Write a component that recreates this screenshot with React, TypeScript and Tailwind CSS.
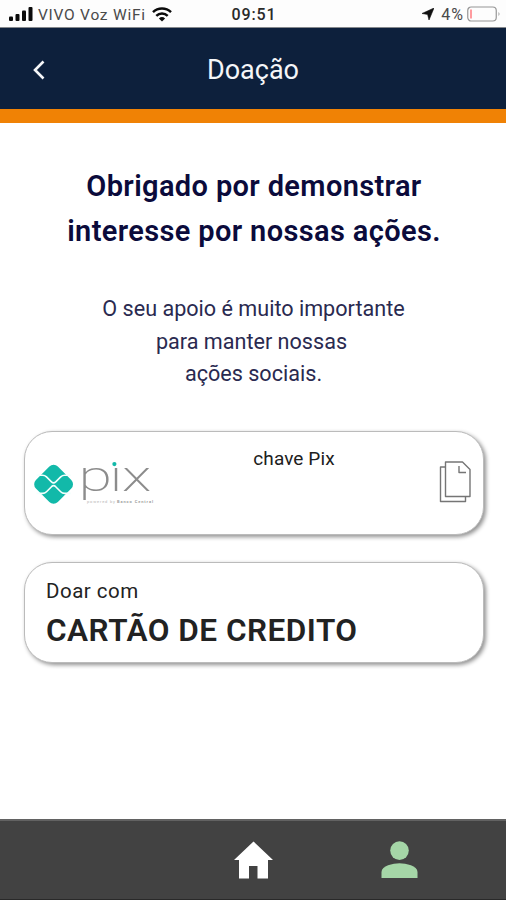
import React from "react";

function SignalIcon() {
  return (
    <svg width="24" height="14" viewBox="0 0 24 14" fill="#0b0b0b">
      <rect x="0" y="9.5" width="4" height="4.5" rx="1" />
      <rect x="6.5" y="7" width="4" height="7" rx="1" />
      <rect x="13" y="3.5" width="4" height="10.5" rx="1" />
      <rect x="19.5" y="0" width="4" height="14" rx="1" />
    </svg>
  );
}

function WifiIcon() {
  return (
    <svg width="20" height="15" viewBox="0 0 20 15" fill="none" stroke="#0b0b0b" strokeWidth="2.5">
      <path d="M1 5.2A13 13 0 0 1 19 5.2" />
      <path d="M4.3 8.8A8.2 8.2 0 0 1 15.7 8.8" />
      <path d="M6.9 11.5a4.5 4.5 0 0 1 6.2 0L10 14.6z" fill="#0b0b0b" stroke="none" />
    </svg>
  );
}

function StatusBar() {
  return (
    <div className="grid h-7 grid-cols-[1fr_48px_1fr] items-center border-b border-[#85888c] bg-[#fdfdfd] pt-px text-[#4a4a4a]">
      <div className="flex items-center pl-[9px]">
        <SignalIcon />
        <span className="mt-px ml-[5px] w-[109px] text-[15.5px] leading-5 tracking-[0.75px] whitespace-nowrap">VIVO Voz WiFi</span>
        <span className="ml-[5px]"><WifiIcon /></span>
      </div>
      <span className="mt-px pl-[2px] text-center text-[16px] leading-5 font-medium tracking-[0.9px] text-[#2a2a2a]">09:51</span>
      <div className="flex items-center justify-end pr-[5px]">
        <svg width="12" height="12" viewBox="0 0 12 12" fill="#111">
          <path d="M12 0 7 12 5.600 6.400 0 5.500z" stroke="#111" strokeWidth="0.6" strokeLinejoin="round" />
        </svg>
        <span className="mt-px ml-[7px] text-[16px] leading-5 tracking-[1px]">4%</span>
        <svg className="ml-[3px]" width="34" height="16" viewBox="0 0 34 16" fill="none">
          <rect x="0.75" y="1" width="28.5" height="14" rx="3.5" stroke="#969696" strokeWidth="1.2" />
          <rect x="3" y="3.5" width="2" height="9" fill="#ff9b9f" />
          <path d="M31.5 6v4q2-2 0-4" fill="#999" />
        </svg>
      </div>
    </div>
  );
}

function PixLogo() {
  return (
    <svg className="overflow-visible" width="122" height="46" viewBox="0 0 122 46" role="img" aria-label="pix">
      <rect x="5.1" y="7.8" width="31" height="31" rx="6" transform="rotate(45 20.6 23.3)" fill="#12b9a9" />
      <g fill="none" stroke="#f4fffd" strokeWidth="1.6">
        <path d="M3.500 14.200h6q2.300 0 4 1.700l5 5q2.100 2 4.200 0l5-5q1.700-1.700 4-1.700h6" />
        <path d="M3.500 32.400h6q2.300 0 4-1.700l5-5q2.100-2 4.200 0l5 5q1.700 1.700 4 1.700h6" />
      </g>
      <text transform="scale(1.45 1)" x="31.400 52.800 61.300" y="30" fontSize="42" fontWeight="200" fill="#8c8c8c">pix</text>
      <rect x="74" y="-6" width="16" height="11.500" fill="#fff" />
      <circle cx="81.400" cy="3.100" r="2.100" fill="#12b9a9" />
      <text x="54" y="41.500" fontSize="4" fill="#b5b5b5" textLength="28">powered by</text>
      <text x="84" y="41.500" fontSize="4" fontWeight="700" fill="#a0a0a0" textLength="36">Banco Central</text>
    </svg>
  );
}

function CopyIcon() {
  return (
    <svg width="32" height="42" viewBox="0 0 32 42" fill="none" stroke="#757575" strokeWidth="1.4" strokeLinejoin="round">
      <path d="M6.500 1h17L31 8.500V35.500H6.500z" />
      <path d="M6.500 6H1.500v34.500h25v-5M20 5v6.500h7" />
    </svg>
  );
}

export default function App() {
  return (
    <div className="flex h-[900px] w-[506px] flex-col bg-white font-[Roboto,sans-serif]">
      <StatusBar />
      <header className="grid h-[95px] grid-cols-[78px_1fr_78px] items-center border-b-[14px] border-[#f08205] bg-[#0d203c] text-[#f5f6f8]">
        <button className="flex justify-center pt-[3px]" aria-label="Voltar">
          <svg width="12" height="20" viewBox="0 0 12 20" fill="none" stroke="currentColor" strokeWidth="2.600">
            <path d="M10.500 1.500 2 10l8.500 8.500" />
          </svg>
        </button>
        <h1 className="pt-[3px] text-center text-[27px] leading-8">Doação</h1>
      </header>
      <main className="flex-1 pr-[22px] pl-6 pt-[41px]">
        <h2 className="text-center text-[29px] leading-[45px] font-semibold tracking-[0.36px] text-[#0b0b3b]">
          Obrigado por demonstrar<br />interesse por nossas ações.
        </h2>
        <p className="mt-[39px] mr-px text-center text-[21.600px] leading-[32.500px] text-[#2a2a50]">
          O seu apoio é muito importante<br /><span className="mr-[4px]">para manter nossas</span><br />ações sociais.
        </p>
        <section className="mt-[40px] flex h-[104px] rounded-[28px] border border-[#bbb] bg-white pl-2 shadow-[2px_2px_4px_#909090]">
          <div className="mt-[29px] w-[122px]"><PixLogo /></div>
          <div className="flex-1 pt-[15px] pr-[6px] text-center text-[19px] leading-6 tracking-[0.1px] text-[#202020]">chave Pix</div>
          <button className="mt-[29px] mr-[12px] self-start" aria-label="Copiar chave"><CopyIcon /></button>
        </section>
        <section className="mt-[27px] h-[101px] rounded-[28px] border border-[#bbb] bg-white pt-[16px] pl-[21px] text-[#222] shadow-[2px_2px_4px_#909090]">
          <p className="text-[20.500px] leading-6 tracking-[0.5px]">Doar com</p>
          <p className="mt-[8px] text-[31.500px] leading-10 font-semibold tracking-[0.5px]">CARTÃO DE CREDITO</p>
        </section>
      </main>
      <nav className="flex h-[81px] items-start border-t-2 border-b border-t-[#626262] border-b-[#292929] bg-[#424242]">
        <button className="mt-[20px] ml-[234px]" aria-label="Início">
          <svg width="39" height="38" viewBox="0 0 39 38" fill="#fff"><path d="M19.500 0.500 39 19h-5v18.500H23.500V25h-8.500v12.500H5V19H0z" /></svg>
        </button>
        <button className="mt-[20px] ml-[108px]" aria-label="Perfil">
          <svg width="37" height="38" viewBox="0 0 37 38" fill="#a5d6a7"><circle cx="18.500" cy="9.600" r="9.300" /><path d="M0.500 37v-6C0.500 25 12 22.300 18.500 22.300S36.500 25 36.500 31v6z" /></svg>
        </button>
      </nav>
    </div>
  );
}
